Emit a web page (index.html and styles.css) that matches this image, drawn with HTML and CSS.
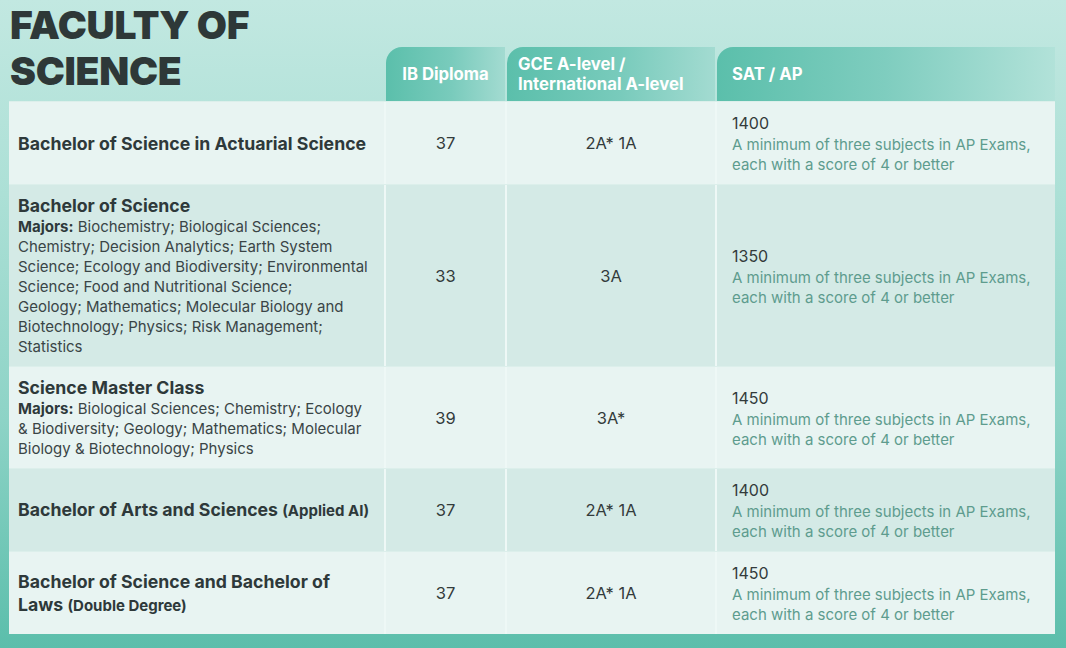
FILE: index.html
```html
<!DOCTYPE html>
<html lang="en">
<head>
<meta charset="utf-8">
<title>Faculty of Science</title>
<link rel="stylesheet" href="styles.css">
</head>
<body>
<main class="sheet">
  <div class="head">
    <h1 class="title">FACULTY OF<br>SCIENCE</h1>
    <div class="tab tab-center">IB Diploma</div>
    <div class="tab tab-left">GCE A-level /<br>International A-level</div>
    <div class="tab tab-left tab-wide">SAT / AP</div>
  </div>

  <div class="row light">
    <div class="cell prog"><div class="pname">Bachelor of Science in Actuarial Science</div></div>
    <div class="cell num">37</div>
    <div class="cell num">2A* 1A</div>
    <div class="cell sat"><div class="score">1400</div><div class="desc">A minimum of three subjects in AP Exams, each with a score of 4 or better</div></div>
  </div>

  <div class="row shade">
    <div class="cell prog"><div class="pname">Bachelor of Science</div><div class="majors"><b>Majors:</b> Biochemistry; Biological Sciences; Chemistry; Decision Analytics; Earth System Science; Ecology and Biodiversity; Environmental Science; Food and Nutritional Science;<br>Geology; Mathematics; Molecular Biology and Biotechnology; Physics; Risk Management; Statistics</div></div>
    <div class="cell num">33</div>
    <div class="cell num">3A</div>
    <div class="cell sat"><div class="score">1350</div><div class="desc">A minimum of three subjects in AP Exams, each with a score of 4 or better</div></div>
  </div>

  <div class="row light">
    <div class="cell prog"><div class="pname">Science Master Class</div><div class="majors"><b>Majors:</b> Biological Sciences; Chemistry; Ecology &amp; Biodiversity; Geology; Mathematics; Molecular Biology &amp; Biotechnology; Physics</div></div>
    <div class="cell num">39</div>
    <div class="cell num">3A*</div>
    <div class="cell sat"><div class="score">1450</div><div class="desc">A minimum of three subjects in AP Exams, each with a score of 4 or better</div></div>
  </div>

  <div class="row shade">
    <div class="cell prog"><div class="pname">Bachelor of Arts and Sciences <span class="note">(Applied AI)</span></div></div>
    <div class="cell num">37</div>
    <div class="cell num">2A* 1A</div>
    <div class="cell sat"><div class="score">1400</div><div class="desc">A minimum of three subjects in AP Exams, each with a score of 4 or better</div></div>
  </div>

  <div class="row light">
    <div class="cell prog"><div class="pname">Bachelor of Science and Bachelor of Laws <span class="note">(Double Degree)</span></div></div>
    <div class="cell num">37</div>
    <div class="cell num">2A* 1A</div>
    <div class="cell sat"><div class="score">1450</div><div class="desc">A minimum of three subjects in AP Exams, each with a score of 4 or better</div></div>
  </div>
</main>
</body>
</html>
```

FILE: styles.css
```css
html {
  height: 100%;
  background: linear-gradient(180deg, #c2e8e1 0%, #ace0d6 30%, #8dd3c6 65%, #5bbeab 100%);
}
body {
  margin: 0;
  min-height: 100%;
  font-family: Inter, "Noto Sans", sans-serif;
  color: #2f3a3b;
}
.sheet {
  width: 1046px;
  margin-left: 9px;
}
.head {
  display: grid;
  grid-template-columns: 375px 119px 208px 338px;
  column-gap: 2px;
  align-items: end;
}
.title {
  margin: 0;
  padding: 2px 0 7px 1px;
  font-size: 39px;
  line-height: 46px;
  font-weight: 900;
  letter-spacing: -0.3px;
  color: #2e3838;
}
.tab {
  height: 54px;
  box-sizing: border-box;
  border-radius: 16px 0 0 0;
  color: #ffffff;
  font-weight: 700;
  font-size: 16.7px;
  line-height: 20px;
  display: flex;
  align-items: center;
  background: linear-gradient(90deg, #5bbfab 0%, #79cbbc 55%, #a3dbd1 100%);
}
.tab-center { justify-content: center; }
.tab-left { padding-left: 11px; }
.tab-wide { padding-left: 15px; background: linear-gradient(90deg, #5bbfab 0%, #7fcdbf 50%, #b2e2d9 100%); }
.row {
  display: grid;
  grid-template-columns: 375px 119px 208px 338px;
  column-gap: 2px;
  background: #eef8f6;
  border-top: 1px solid #dcefeb;
}
.cell {
  box-sizing: border-box;
  padding: 9px 9px;
}
.light .cell { background: #e8f4f2; }
.shade .cell { background: #d4eae6; }
.prog {
  display: flex;
  flex-direction: column;
  justify-content: center;
}
.pname {
  font-weight: 700;
  font-size: 17.7px;
  line-height: 23px;
  color: #2e393a;
}
.note { font-size: 15px; }
.majors {
  font-size: 15px;
  line-height: 20px;
  color: #3a4546;
}
.majors b { font-weight: 700; color: #2e393a; }
.num {
  display: flex;
  align-items: center;
  justify-content: center;
  font-size: 16.5px;
  color: #333b3b;
}
.sat {
  padding-left: 15px;
  padding-right: 6px;
  display: flex;
  flex-direction: column;
  justify-content: center;
}
.score {
  font-size: 16px;
  line-height: 24px;
  color: #333b3b;
}
.desc {
  font-size: 15px;
  line-height: 20px;
  color: #5e9c8e;
}
```
